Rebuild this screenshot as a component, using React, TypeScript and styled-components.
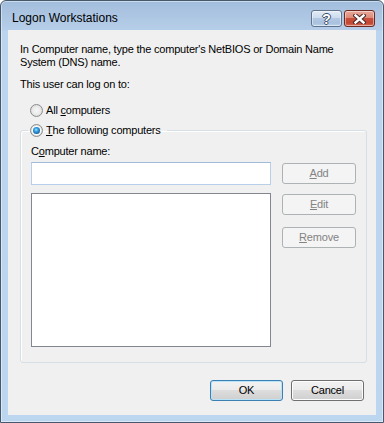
import React from "react";
import styled, { createGlobalStyle } from "styled-components";

const Global = createGlobalStyle`
  html, body { margin: 0; padding: 0; background: #ffffff; }
  body { width: 384px; height: 423px; overflow: hidden; font-family: "Liberation Sans", Arial, sans-serif; }
  * { box-sizing: border-box; }
`;

const Window = styled.div`
  width: 384px;
  height: 423px;
  border: 1px solid #46586b;
  border-radius: 6px 6px 0 0;
  background: linear-gradient(#a2bddc 0px, #b6cee9 29px, #bcd5ef 30px, #bdd6f0 100%);
  box-shadow: inset 0 0 0 1px rgba(255, 255, 255, 0.45);
  display: flex;
  flex-direction: column;
  padding: 0 7px 7px 7px;
`;

const TitleBar = styled.div`
  height: 29px;
  flex: none;
  display: flex;
  align-items: flex-start;
  padding-top: 9px;
`;

const Title = styled.div`
  flex: 1;
  padding-left: 4px;
  font: 12px/17px "Liberation Sans", Arial, sans-serif;
  color: #000000;
`;

const CaptionButtons = styled.div`
  display: flex;
  gap: 2px;
  margin-right: 1px;
`;

const CaptionButton = styled.div<{ $variant: "help" | "close" }>`
  width: 31px;
  height: 17px;
  border-radius: 3px;
  display: flex;
  align-items: center;
  justify-content: center;
  border: 1px solid ${(p) => (p.$variant === "close" ? "#6e2a22" : "#60738c")};
  background: ${(p) =>
    p.$variant === "close"
      ? "linear-gradient(#e9a99b 0%, #dd8a78 45%, #c7503d 50%, #c24632 80%, #d3735a 100%)"
      : "linear-gradient(#e3ecf6 0%, #cddcee 45%, #b2c8e2 50%, #a9c1de 80%, #bcd2ea 100%)"};
  box-shadow: inset 0 0 0 1px rgba(255, 255, 255, 0.45);
`;

const HelpGlyph = styled.span`
  font: bold 14px/14px "Liberation Sans", Arial, sans-serif;
  color: #ffffff;
  text-shadow: -1px 0 #3d4f66, 1px 0 #3d4f66, 0 -1px #3d4f66, 0 1px #3d4f66;
`;

const Client = styled.div`
  flex: 1;
  background: #f0f0f0;
  display: flex;
  flex-direction: column;
  align-items: flex-start;
  padding: 13px 12px 0 12px;
  font: 11px/13px "Liberation Sans", Arial, sans-serif;
  letter-spacing: -0.2px;
  color: #000000;
`;

const Text = styled.div<{ $mt?: number }>`
  margin-top: ${(p) => p.$mt ?? 0}px;
  white-space: nowrap;
`;

const RadioRow = styled.label<{ $mt?: number }>`
  display: flex;
  align-items: center;
  gap: 1px;
  margin-top: ${(p) => p.$mt ?? 0}px;
  padding-left: 10px;
  height: 13px;
  white-space: nowrap;
`;

const RadioCircle = styled.span<{ $checked?: boolean }>`
  width: 13px;
  height: 13px;
  flex: none;
  border-radius: 50%;
  border: 1px solid #8b8c8d;
  background: radial-gradient(circle at 50% 50%, #f6f6f6 0%, #ececec 45%, #d0d0d0 100%);
  display: inline-flex;
  align-items: center;
  justify-content: center;
  margin-right: 2px;
  &::after {
    content: "";
    display: ${(p) => (p.$checked ? "block" : "none")};
    width: 7px;
    height: 7px;
    border-radius: 50%;
    background: radial-gradient(circle at 45% 40%, #9be6ff 0%, #2f9be0 35%, #1b5a98 80%, #173f6c 100%);
    box-shadow: 0 0 0 1px #ffffff;
  }
`;

const Group = styled.fieldset`
  width: 347px;
  margin: 7px 0 0 0;
  padding: 8px 10px 15px 10px;
  border: 1px solid #d5dfe5;
  border-radius: 3px;
  box-shadow: inset 1px 1px 0 #ffffff;
  display: flex;
  flex-direction: column;
  min-inline-size: 0;
`;

const Legend = styled.legend`
  margin-left: -3px;
  padding: 0 6px 0 2px;
  height: 13px;
`;

const LegendInner = styled.span`
  display: flex;
  align-items: center;
  gap: 1px;
  height: 13px;
  white-space: nowrap;
`;

const FieldRow = styled.div`
  display: flex;
  gap: 11px;
  margin-top: 4px;
`;

const LeftColumn = styled.div`
  width: 240px;
  display: flex;
  flex-direction: column;
  gap: 8px;
`;

const TextBox = styled.div`
  height: 23px;
  background: #ffffff;
  border: 1px solid #b7cfe8;
  border-top-color: #9fbbd9;
`;

const ListBox = styled.div`
  height: 154px;
  background: #ffffff;
  border: 1px solid #828790;
`;

const ButtonColumn = styled.div`
  display: flex;
  flex-direction: column;
  padding-top: 1px;
`;

const PushButton = styled.div<{ $width: number; $disabled?: boolean; $default?: boolean; $mt?: number }>`
  width: ${(p) => p.$width}px;
  height: 21px;
  margin-top: ${(p) => p.$mt ?? 0}px;
  display: flex;
  align-items: center;
  justify-content: center;
  border-radius: 3px;
  font: 11px/13px "Liberation Sans", Arial, sans-serif;
  color: ${(p) => (p.$disabled ? "#838383" : "#000000")};
  border: 1px solid ${(p) => (p.$disabled ? "#adb2b5" : p.$default ? "#3c7fb1" : "#707070")};
  background: ${(p) =>
    p.$disabled
      ? "#f4f4f4"
      : "linear-gradient(#f2f2f2 0%, #ebebeb 50%, #dddddd 50%, #cfcfcf 100%)"};
  box-shadow: ${(p) =>
    p.$disabled ? "none" : p.$default ? "inset 0 0 0 1px #b8e3f8" : "inset 0 0 0 1px #fcfcfc"};
`;

const DialogButtons = styled.div`
  align-self: stretch;
  display: flex;
  justify-content: flex-end;
  gap: 8px;
  margin-top: 17px;
`;

export default function App() {
  return (
    <>
      <Global />
      <Window>
        <TitleBar>
          <Title>Logon Workstations</Title>
          <CaptionButtons>
            <CaptionButton $variant="help">
              <HelpGlyph>?</HelpGlyph>
            </CaptionButton>
            <CaptionButton $variant="close">
              <svg width="13" height="10" viewBox="0 0 13 10">
                <g strokeLinecap="square">
                  <path d="M2.5 1.5 L10.5 8.5 M10.5 1.5 L2.5 8.5" stroke="#4a2a28" strokeWidth="4.4" />
                  <path d="M2.5 1.5 L10.5 8.5 M10.5 1.5 L2.5 8.5" stroke="#ffffff" strokeWidth="2.4" />
                </g>
              </svg>
            </CaptionButton>
          </CaptionButtons>
        </TitleBar>
        <Client>
          <Text>
            In Computer name, type the computer's NetBIOS or Domain Name
            <br />
            System (DNS) name.
          </Text>
          <Text $mt={9}>This user can log on to:</Text>
          <RadioRow $mt={13}>
            <RadioCircle />
            <span>
              All <u>c</u>omputers
            </span>
          </RadioRow>
          <Group>
            <Legend>
              <LegendInner>
                <RadioCircle $checked />
                <span>
                  <u>T</u>he following computers
                </span>
              </LegendInner>
            </Legend>
            <Text>
              C<u>o</u>mputer name:
            </Text>
            <FieldRow>
              <LeftColumn>
                <TextBox />
                <ListBox />
              </LeftColumn>
              <ButtonColumn>
                <PushButton $width={74} $disabled>
                  <span>
                    <u>A</u>dd
                  </span>
                </PushButton>
                <PushButton $width={74} $disabled $mt={10}>
                  <span>
                    <u>E</u>dit
                  </span>
                </PushButton>
                <PushButton $width={74} $disabled $mt={12}>
                  <span>
                    <u>R</u>emove
                  </span>
                </PushButton>
              </ButtonColumn>
            </FieldRow>
          </Group>
          <DialogButtons>
            <PushButton $width={73} $default>
              OK
            </PushButton>
            <PushButton $width={73}>Cancel</PushButton>
          </DialogButtons>
        </Client>
      </Window>
    </>
  );
}
